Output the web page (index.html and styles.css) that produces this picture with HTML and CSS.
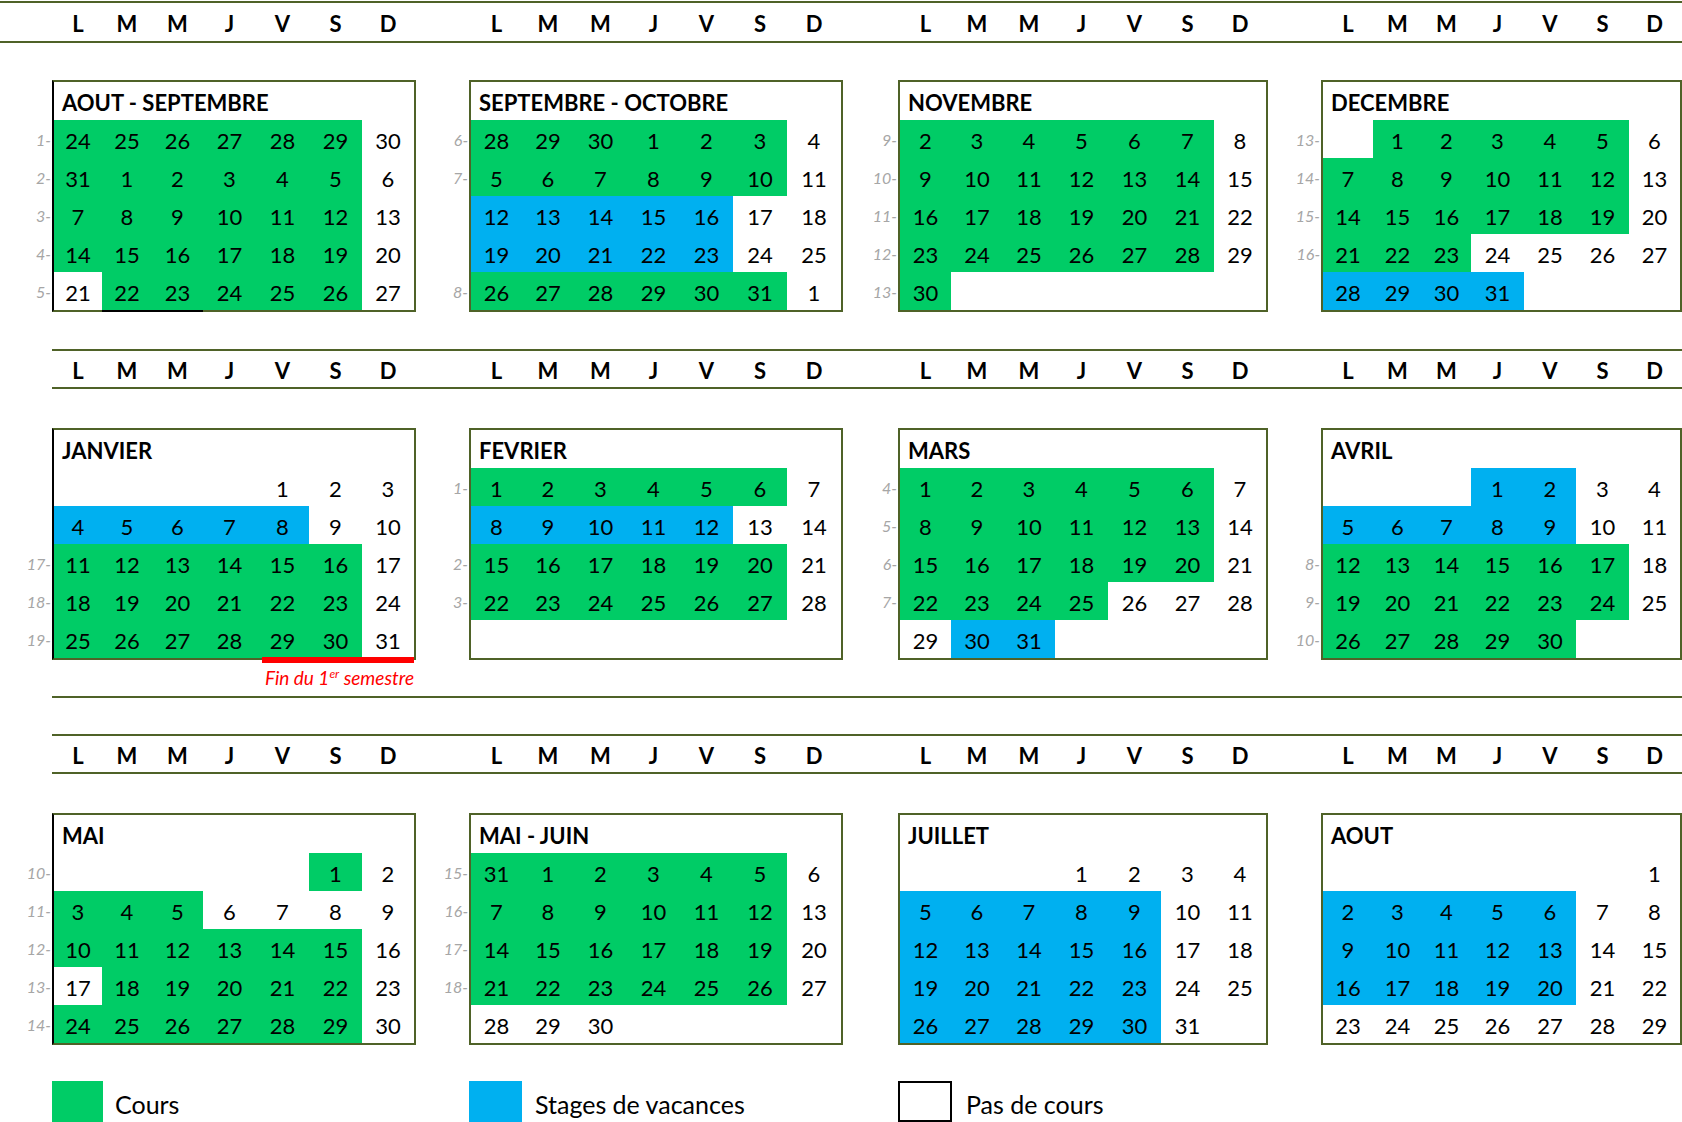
FILE: index.html
```html
<!DOCTYPE html>
<html lang="fr">
<head>
<meta charset="utf-8">
<title>Calendrier des cours</title>
<link rel="stylesheet" href="styles.css">
</head>
<body>
<div class="sheet">

  <div class="dayhead first">
    <div class="hunit u1"><div class="hgut"></div><div class="hdays"><span>L</span><span>M</span><span>M</span><span>J</span><span>V</span><span>S</span><span>D</span></div></div>
    <div class="hunit u2"><div class="hgut"></div><div class="hdays"><span>L</span><span>M</span><span>M</span><span>J</span><span>V</span><span>S</span><span>D</span></div></div>
    <div class="hunit u3"><div class="hgut"></div><div class="hdays"><span>L</span><span>M</span><span>M</span><span>J</span><span>V</span><span>S</span><span>D</span></div></div>
    <div class="hunit u4"><div class="hgut"></div><div class="hdays"><span>L</span><span>M</span><span>M</span><span>J</span><span>V</span><span>S</span><span>D</span></div></div>
  </div>

  <div class="band band1">
    <div class="month u1">
      <div class="weeks"><span></span><span>1-</span><span>2-</span><span>3-</span><span>4-</span><span>5-</span></div>
      <div class="box dark-left">
        <div class="title">AOUT - SEPTEMBRE</div>
        <div class="days">
          <span class="g">24</span><span class="g">25</span><span class="g">26</span><span class="g">27</span><span class="g">28</span><span class="g">29</span><span>30</span>
          <span class="g">31</span><span class="g">1</span><span class="g">2</span><span class="g">3</span><span class="g">4</span><span class="g">5</span><span>6</span>
          <span class="g">7</span><span class="g">8</span><span class="g">9</span><span class="g">10</span><span class="g">11</span><span class="g">12</span><span>13</span>
          <span class="g">14</span><span class="g">15</span><span class="g">16</span><span class="g">17</span><span class="g">18</span><span class="g">19</span><span>20</span>
          <span>21</span><span class="g bk">22</span><span class="g bk">23</span><span class="g">24</span><span class="g">25</span><span class="g">26</span><span>27</span>
        </div>
      </div>
    </div>
    <div class="month u2">
      <div class="weeks"><span></span><span>6-</span><span>7-</span><span></span><span></span><span>8-</span></div>
      <div class="box">
        <div class="title">SEPTEMBRE - OCTOBRE</div>
        <div class="days">
          <span class="g">28</span><span class="g">29</span><span class="g">30</span><span class="g">1</span><span class="g">2</span><span class="g">3</span><span>4</span>
          <span class="g">5</span><span class="g">6</span><span class="g">7</span><span class="g">8</span><span class="g">9</span><span class="g">10</span><span>11</span>
          <span class="b">12</span><span class="b">13</span><span class="b">14</span><span class="b">15</span><span class="b">16</span><span>17</span><span>18</span>
          <span class="b">19</span><span class="b">20</span><span class="b">21</span><span class="b">22</span><span class="b">23</span><span>24</span><span>25</span>
          <span class="g">26</span><span class="g">27</span><span class="g">28</span><span class="g">29</span><span class="g">30</span><span class="g">31</span><span>1</span>
        </div>
      </div>
    </div>
    <div class="month u3">
      <div class="weeks"><span></span><span>9-</span><span>10-</span><span>11-</span><span>12-</span><span>13-</span></div>
      <div class="box">
        <div class="title">NOVEMBRE</div>
        <div class="days">
          <span class="g">2</span><span class="g">3</span><span class="g">4</span><span class="g">5</span><span class="g">6</span><span class="g">7</span><span>8</span>
          <span class="g">9</span><span class="g">10</span><span class="g">11</span><span class="g">12</span><span class="g">13</span><span class="g">14</span><span>15</span>
          <span class="g">16</span><span class="g">17</span><span class="g">18</span><span class="g">19</span><span class="g">20</span><span class="g">21</span><span>22</span>
          <span class="g">23</span><span class="g">24</span><span class="g">25</span><span class="g">26</span><span class="g">27</span><span class="g">28</span><span>29</span>
          <span class="g">30</span><span></span><span></span><span></span><span></span><span></span><span></span>
        </div>
      </div>
    </div>
    <div class="month u4">
      <div class="weeks"><span></span><span>13-</span><span>14-</span><span>15-</span><span>16-</span><span></span></div>
      <div class="box">
        <div class="title">DECEMBRE</div>
        <div class="days">
          <span></span><span class="g">1</span><span class="g">2</span><span class="g">3</span><span class="g">4</span><span class="g">5</span><span>6</span>
          <span class="g">7</span><span class="g">8</span><span class="g">9</span><span class="g">10</span><span class="g">11</span><span class="g">12</span><span>13</span>
          <span class="g">14</span><span class="g">15</span><span class="g">16</span><span class="g">17</span><span class="g">18</span><span class="g">19</span><span>20</span>
          <span class="g">21</span><span class="g">22</span><span class="g">23</span><span>24</span><span>25</span><span>26</span><span>27</span>
          <span class="b">28</span><span class="b">29</span><span class="b">30</span><span class="b">31</span><span></span><span></span><span></span>
        </div>
      </div>
    </div>
  </div>

  <div class="dayhead inset h2">
    <div class="hunit u1"><div class="hgut"></div><div class="hdays"><span>L</span><span>M</span><span>M</span><span>J</span><span>V</span><span>S</span><span>D</span></div></div>
    <div class="hunit u2"><div class="hgut"></div><div class="hdays"><span>L</span><span>M</span><span>M</span><span>J</span><span>V</span><span>S</span><span>D</span></div></div>
    <div class="hunit u3"><div class="hgut"></div><div class="hdays"><span>L</span><span>M</span><span>M</span><span>J</span><span>V</span><span>S</span><span>D</span></div></div>
    <div class="hunit u4"><div class="hgut"></div><div class="hdays"><span>L</span><span>M</span><span>M</span><span>J</span><span>V</span><span>S</span><span>D</span></div></div>
  </div>

  <div class="band band2">
    <div class="month u1">
      <div class="weeks"><span></span><span></span><span></span><span>17-</span><span>18-</span><span>19-</span></div>
      <div class="box dark-left">
        <div class="title">JANVIER</div>
        <div class="days">
          <span></span><span></span><span></span><span></span><span>1</span><span>2</span><span>3</span>
          <span class="b">4</span><span class="b">5</span><span class="b">6</span><span class="b">7</span><span class="b">8</span><span>9</span><span>10</span>
          <span class="g">11</span><span class="g">12</span><span class="g">13</span><span class="g">14</span><span class="g">15</span><span class="g">16</span><span>17</span>
          <span class="g">18</span><span class="g">19</span><span class="g">20</span><span class="g">21</span><span class="g">22</span><span class="g">23</span><span>24</span>
          <span class="g">25</span><span class="g">26</span><span class="g">27</span><span class="g">28</span><span class="g">29</span><span class="g">30</span><span>31</span>
        </div>
      </div>
      <div class="note">Fin du 1<sup>er</sup> semestre</div>
    </div>
    <div class="month u2">
      <div class="weeks"><span></span><span>1-</span><span></span><span>2-</span><span>3-</span><span></span></div>
      <div class="box">
        <div class="title">FEVRIER</div>
        <div class="days">
          <span class="g">1</span><span class="g">2</span><span class="g">3</span><span class="g">4</span><span class="g">5</span><span class="g">6</span><span>7</span>
          <span class="b">8</span><span class="b">9</span><span class="b">10</span><span class="b">11</span><span class="b">12</span><span>13</span><span>14</span>
          <span class="g">15</span><span class="g">16</span><span class="g">17</span><span class="g">18</span><span class="g">19</span><span class="g">20</span><span>21</span>
          <span class="g">22</span><span class="g">23</span><span class="g">24</span><span class="g">25</span><span class="g">26</span><span class="g">27</span><span>28</span>
          <span></span><span></span><span></span><span></span><span></span><span></span><span></span>
        </div>
      </div>
    </div>
    <div class="month u3">
      <div class="weeks"><span></span><span>4-</span><span>5-</span><span>6-</span><span>7-</span><span></span></div>
      <div class="box">
        <div class="title">MARS</div>
        <div class="days">
          <span class="g">1</span><span class="g">2</span><span class="g">3</span><span class="g">4</span><span class="g">5</span><span class="g">6</span><span>7</span>
          <span class="g">8</span><span class="g">9</span><span class="g">10</span><span class="g">11</span><span class="g">12</span><span class="g">13</span><span>14</span>
          <span class="g">15</span><span class="g">16</span><span class="g">17</span><span class="g">18</span><span class="g">19</span><span class="g">20</span><span>21</span>
          <span class="g">22</span><span class="g">23</span><span class="g">24</span><span class="g">25</span><span>26</span><span>27</span><span>28</span>
          <span>29</span><span class="b">30</span><span class="b">31</span><span></span><span></span><span></span><span></span>
        </div>
      </div>
    </div>
    <div class="month u4">
      <div class="weeks"><span></span><span></span><span></span><span>8-</span><span>9-</span><span>10-</span></div>
      <div class="box">
        <div class="title">AVRIL</div>
        <div class="days">
          <span></span><span></span><span></span><span class="b">1</span><span class="b">2</span><span>3</span><span>4</span>
          <span class="b">5</span><span class="b">6</span><span class="b">7</span><span class="b">8</span><span class="b">9</span><span>10</span><span>11</span>
          <span class="g">12</span><span class="g">13</span><span class="g">14</span><span class="g">15</span><span class="g">16</span><span class="g">17</span><span>18</span>
          <span class="g">19</span><span class="g">20</span><span class="g">21</span><span class="g">22</span><span class="g">23</span><span class="g">24</span><span>25</span>
          <span class="g">26</span><span class="g">27</span><span class="g">28</span><span class="g">29</span><span class="g">30</span><span></span><span></span>
        </div>
      </div>
    </div>
  </div>

  <div class="separator"></div>

  <div class="dayhead inset h3">
    <div class="hunit u1"><div class="hgut"></div><div class="hdays"><span>L</span><span>M</span><span>M</span><span>J</span><span>V</span><span>S</span><span>D</span></div></div>
    <div class="hunit u2"><div class="hgut"></div><div class="hdays"><span>L</span><span>M</span><span>M</span><span>J</span><span>V</span><span>S</span><span>D</span></div></div>
    <div class="hunit u3"><div class="hgut"></div><div class="hdays"><span>L</span><span>M</span><span>M</span><span>J</span><span>V</span><span>S</span><span>D</span></div></div>
    <div class="hunit u4"><div class="hgut"></div><div class="hdays"><span>L</span><span>M</span><span>M</span><span>J</span><span>V</span><span>S</span><span>D</span></div></div>
  </div>

  <div class="band band3">
    <div class="month u1">
      <div class="weeks"><span></span><span>10-</span><span>11-</span><span>12-</span><span>13-</span><span>14-</span></div>
      <div class="box dark-left">
        <div class="title">MAI</div>
        <div class="days">
          <span></span><span></span><span></span><span></span><span></span><span class="g">1</span><span>2</span>
          <span class="g">3</span><span class="g">4</span><span class="g">5</span><span>6</span><span>7</span><span>8</span><span>9</span>
          <span class="g">10</span><span class="g">11</span><span class="g">12</span><span class="g">13</span><span class="g">14</span><span class="g">15</span><span>16</span>
          <span>17</span><span class="g">18</span><span class="g">19</span><span class="g">20</span><span class="g">21</span><span class="g">22</span><span>23</span>
          <span class="g">24</span><span class="g">25</span><span class="g">26</span><span class="g">27</span><span class="g">28</span><span class="g">29</span><span>30</span>
        </div>
      </div>
    </div>
    <div class="month u2">
      <div class="weeks"><span></span><span>15-</span><span>16-</span><span>17-</span><span>18-</span><span></span></div>
      <div class="box">
        <div class="title">MAI - JUIN</div>
        <div class="days">
          <span class="g">31</span><span class="g">1</span><span class="g">2</span><span class="g">3</span><span class="g">4</span><span class="g">5</span><span>6</span>
          <span class="g">7</span><span class="g">8</span><span class="g">9</span><span class="g">10</span><span class="g">11</span><span class="g">12</span><span>13</span>
          <span class="g">14</span><span class="g">15</span><span class="g">16</span><span class="g">17</span><span class="g">18</span><span class="g">19</span><span>20</span>
          <span class="g">21</span><span class="g">22</span><span class="g">23</span><span class="g">24</span><span class="g">25</span><span class="g">26</span><span>27</span>
          <span>28</span><span>29</span><span>30</span><span></span><span></span><span></span><span></span>
        </div>
      </div>
    </div>
    <div class="month u3">
      <div class="weeks"><span></span><span></span><span></span><span></span><span></span><span></span></div>
      <div class="box">
        <div class="title">JUILLET</div>
        <div class="days">
          <span></span><span></span><span></span><span>1</span><span>2</span><span>3</span><span>4</span>
          <span class="b">5</span><span class="b">6</span><span class="b">7</span><span class="b">8</span><span class="b">9</span><span>10</span><span>11</span>
          <span class="b">12</span><span class="b">13</span><span class="b">14</span><span class="b">15</span><span class="b">16</span><span>17</span><span>18</span>
          <span class="b">19</span><span class="b">20</span><span class="b">21</span><span class="b">22</span><span class="b">23</span><span>24</span><span>25</span>
          <span class="b">26</span><span class="b">27</span><span class="b">28</span><span class="b">29</span><span class="b">30</span><span>31</span><span></span>
        </div>
      </div>
    </div>
    <div class="month u4">
      <div class="weeks"><span></span><span></span><span></span><span></span><span></span><span></span></div>
      <div class="box">
        <div class="title">AOUT</div>
        <div class="days">
          <span></span><span></span><span></span><span></span><span></span><span></span><span>1</span>
          <span class="b">2</span><span class="b">3</span><span class="b">4</span><span class="b">5</span><span class="b">6</span><span>7</span><span>8</span>
          <span class="b">9</span><span class="b">10</span><span class="b">11</span><span class="b">12</span><span class="b">13</span><span>14</span><span>15</span>
          <span class="b">16</span><span class="b">17</span><span class="b">18</span><span class="b">19</span><span class="b">20</span><span>21</span><span>22</span>
          <span>23</span><span>24</span><span>25</span><span>26</span><span>27</span><span>28</span><span>29</span>
        </div>
      </div>
    </div>
  </div>

  <div class="legend">
    <div class="lunit u1"><div class="sw sw-g"></div><div class="ltext lt-g">Cours</div></div>
    <div class="lunit u2"><div class="sw sw-b"></div><div class="ltext lt-b">Stages de vacances</div></div>
    <div class="lunit u3"><div class="sw sw-w"></div><div class="ltext lt-w">Pas de cours</div></div>
  </div>

</div>
</body>
</html>
```

FILE: styles.css
```css
html, body {
  margin: 0;
  padding: 0;
  background: #ffffff;
  overflow: hidden;
}

body {
  font-family: Lato, "Open Sans", "Liberation Sans", sans-serif;
  color: #000000;
}

.sheet {
  width: 1682px;
  height: 1122px;
  display: flex;
  flex-direction: column;
}

/* column units: week gutter + month box */
.u1 { --gut: 52px; --box: 364px; --cols: 48px 50px 51px 53px 53px 53px 52px; }
.u2 { --gut: 53px; --box: 374px; --cols: 51px 52px 53px 53px 53px 54px 54px; }
.u3 { --gut: 55px; --box: 370px; --cols: 51px 52px 52px 53px 53px 53px 52px; }
.u4 { --gut: 53px; --box: 361px; --cols: 50px 49px 49px 53px 52px 53px 51px; }

/* weekday header strip */
.dayhead {
  display: flex;
  flex: none;
  height: 36px;
  border-top: 2px solid #4f6228;
  border-bottom: 2px solid #4f6228;
}

.dayhead.first {
  margin-top: 1px;
  height: 38px;
}

.dayhead.inset {
  margin-left: 52px;
}

.dayhead.h2 { margin-top: 37px; }
.dayhead.h3 { margin-top: 36px; }

.hunit {
  display: flex;
  flex: none;
}

.hgut {
  width: var(--gut);
  flex: none;
}

.dayhead.inset .u1 .hgut {
  width: 0;
}

.hdays {
  width: var(--box);
  box-sizing: border-box;
  padding: 0 2px;
  display: grid;
  grid-template-columns: var(--cols);
}

.hdays span {
  text-align: center;
  font-weight: 700;
  font-size: 22px;
  line-height: 36px;
  padding-top: 2px;
}

.dayhead.first .hdays span {
  line-height: 38px;
}

/* month bands */
.band {
  display: flex;
  align-items: flex-start;
  flex: none;
}

.band1 { margin-top: 37px; }
.band2 { margin-top: 39px; }
.band3 { margin-top: 39px; }

.month {
  display: grid;
  grid-template-columns: var(--gut) var(--box);
  flex: none;
}

.weeks {
  display: flex;
  flex-direction: column;
}

.weeks span {
  height: 38px;
  box-sizing: border-box;
  padding-top: 2px;
  padding-right: 1px;
  line-height: 36px;
  text-align: right;
  font-style: italic;
  font-size: 16px;
  color: #a6a6a6;
}

.weeks span:first-child {
  height: 40px;
}

.box {
  width: var(--box);
  box-sizing: border-box;
  border: 2px solid #4f6228;
  background: #ffffff;
}

.box.dark-left {
  border-left-color: #000000;
}

.title {
  height: 38px;
  box-sizing: border-box;
  padding-top: 2px;
  line-height: 38px;
  padding-left: 8px;
  font-weight: 700;
  font-size: 22px;
  white-space: nowrap;
}

.days {
  display: grid;
  grid-template-columns: var(--cols);
  grid-auto-rows: 38px;
}

.days span {
  box-sizing: border-box;
  padding-top: 3px;
  line-height: 35px;
  text-align: center;
  font-size: 22px;
}

.days .g { background: #00cc66; }
.days .b { background: #00b0f0; }
.days .bk { box-shadow: 0 2px 0 #000000; }

/* end of semester note */
.note {
  grid-column: 2;
  margin-top: -3px;
  margin-left: 210px;
  width: 152px;
  border-top: 6px solid #ff0000;
  color: #ff0000;
  font-style: italic;
  font-size: 19px;
  line-height: 30px;
  text-align: right;
  white-space: nowrap;
}

.note sup {
  font-size: 12px;
  line-height: 0;
  vertical-align: 7px;
}

.separator {
  flex: none;
  margin-top: 3px;
  margin-left: 52px;
  border-top: 2px solid #4f6228;
}

/* legend */
.legend {
  display: flex;
  flex: none;
  margin-top: 36px;
}

.lunit {
  display: flex;
  align-items: flex-start;
  box-sizing: border-box;
  width: calc(var(--gut) + var(--box));
  padding-left: var(--gut);
}

.sw {
  flex: none;
  height: 41px;
  box-sizing: border-box;
}

.sw-g { width: 51px; background: #00cc66; }
.sw-b { width: 53px; background: #00b0f0; }
.sw-w { width: 54px; border: 2px solid #000000; background: #ffffff; }

.ltext {
  font-size: 25px;
  line-height: 40px;
  padding-top: 3px;
  white-space: nowrap;
}

.lt-g { margin-left: 12px; }
.lt-b { margin-left: 13px; }
.lt-w { margin-left: 14px; }
```
